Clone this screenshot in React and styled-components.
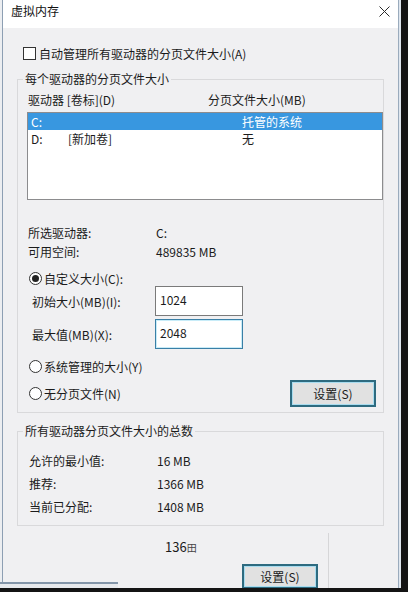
import React from 'react';
import styled, { createGlobalStyle } from 'styled-components';

const drives = [
  { letter: 'C:', label: '', size: '托管的系统', selected: true },
  { letter: 'D:', label: '[新加卷]', size: '无', selected: false },
];

const totals = [
  ['允许的最小值:', '16 MB'],
  ['推荐:', '1366 MB'],
  ['当前已分配:', '1408 MB'],
];

export default function App() {
  return (
    <Screen>
      <GlobalStyle />
      <Window>
        <TitleBar>
          <Title>虚拟内存</Title>
          <Close width="11" height="11" viewBox="0 0 11 11">
            <path d="M0.5 0.5 L10.5 10.5 M10.5 0.5 L0.5 10.5" stroke="#2a2a2a" strokeWidth="1" />
          </Close>
        </TitleBar>

        <Body>
          <CheckRow>
            <CheckBox />
            <span>自动管理所有驱动器的分页文件大小(A)</span>
          </CheckRow>

          <Group $pad="5px 0 5px 9px">
            <Legend $shift={-4}>每个驱动器的分页文件大小</Legend>
            <HeaderRow>
              <span>驱动器 [卷标](D)</span>
              <span>分页文件大小(MB)</span>
            </HeaderRow>
            <List>
              {drives.map((d) => (
                <ListRow key={d.letter} $selected={d.selected}>
                  <span>{d.letter}</span>
                  <span>{d.label}</span>
                  <span>{d.size}</span>
                </ListRow>
              ))}
            </List>

            <InfoRow $top={23}>
              <span>所选驱动器:</span>
              <span>C:</span>
            </InfoRow>
            <InfoRow>
              <span>可用空间:</span>
              <span>489835 MB</span>
            </InfoRow>

            <RadioRow $top={10}>
              <Radio $checked />
              <span>自定义大小(C):</span>
            </RadioRow>
            <FieldRow>
              <FieldLabel>初始大小(MB)(I):</FieldLabel>
              <TextBox>1024</TextBox>
            </FieldRow>
            <FieldRow $top={3}>
              <FieldLabel>最大值(MB)(X):</FieldLabel>
              <TextBox $focused>2048</TextBox>
            </FieldRow>
            <RadioRow $top={10}>
              <Radio />
              <span>系统管理的大小(Y)</span>
            </RadioRow>
            <ActionRow>
              <RadioRow>
                <Radio />
                <span>无分页文件(N)</span>
              </RadioRow>
              <Button $w={86} $h={27}>设置(S)</Button>
            </ActionRow>
          </Group>

          <Group $pad="10px 0 7px 11px">
            <Legend $shift={-6}>所有驱动器分页文件大小的总数</Legend>
            {totals.map(([k, v]) => (
              <TotalRow key={k}>
                <span>{k}</span>
                <span>{v}</span>
              </TotalRow>
            ))}
          </Group>
        </Body>

        <Footer>
          <FooterMain>
            <Counter>
              136<small>田</small>
            </Counter>
            <FooterButton $w={76} $h={25}>设置(S)</FooterButton>
          </FooterMain>
          <FooterSide />
        </Footer>
      </Window>
      <BackCorner />
    </Screen>
  );
}

const GlobalStyle = createGlobalStyle`
  html, body {
    margin: 0;
    padding: 0;
    background: #141414;
  }
  body {
    font-family: "Noto Sans CJK SC", "Microsoft YaHei", sans-serif;
    font-size: 12px;
    color: #1b1b1b;
  }
  * {
    box-sizing: border-box;
  }
`;

const Screen = styled.div`
  position: relative;
  width: 408px;
  height: 592px;
  overflow: hidden;
  background: #141414;
`;

const Window = styled.div`
  display: flex;
  flex-direction: column;
  width: 397px;
  height: 588px;
  margin-left: 2px;
  background: #f0f0f2;
  border-left: 1px solid #8d9fb3;
  border-right: 1px solid #9aabbd;
  box-shadow: 2px 0 0 #dfe6ee, -2px 0 0 #eceef1;
  overflow: hidden;
`;

const TitleBar = styled.div`
  display: flex;
  justify-content: space-between;
  align-items: flex-start;
  height: 28px;
  flex-shrink: 0;
  padding: 3px 0 0 8px;
  background: #ffffff;
`;

const Title = styled.div`
  line-height: 16px;
  color: #111;
`;

const Close = styled.svg`
  margin: 3px 8px 0 0;
`;

const Body = styled.div`
  padding: 17px 14px 0 14px;
`;

const CheckRow = styled.div`
  display: flex;
  align-items: center;
  gap: 3px;
  height: 16px;
  margin-left: 6px;
`;

const CheckBox = styled.span`
  width: 13px;
  height: 13px;
  border: 1px solid #333;
  background: #fff;
`;

const Group = styled.fieldset`
  margin: 10px 0 0;
  min-width: 0;
  padding: ${(p) => p.$pad};
  border: 1px solid #d9d9db;
`;

const Legend = styled.legend`
  padding: 0 2px;
  margin-left: ${(p) => p.$shift}px;
  line-height: 16px;
`;

const HeaderRow = styled.div`
  display: grid;
  grid-template-columns: 180px 1fr;
  height: 16px;
  line-height: 16px;
  padding-left: 1px;
`;

const List = styled.div`
  height: 88px;
  margin-top: 4px;
  background: #fff;
  border: 1px solid #8c8c8e;
`;

const ListRow = styled.div`
  display: grid;
  grid-template-columns: 37px 174px 1fr;
  height: 17px;
  line-height: 17px;
  padding-left: 3px;
  background: ${(p) => (p.$selected ? '#3897e0' : 'transparent')};
  color: ${(p) => (p.$selected ? '#ffffff' : '#1b1b1b')};
`;

const InfoRow = styled.div`
  display: grid;
  grid-template-columns: 128px 1fr;
  height: 19px;
  line-height: 19px;
  margin-top: ${(p) => p.$top || 0}px;
  padding-left: 1px;
`;

const RadioRow = styled.div`
  display: flex;
  align-items: center;
  gap: 2px;
  height: 15px;
  margin-top: ${(p) => p.$top || 0}px;
  padding-left: 2px;
`;

const Radio = styled.span`
  display: inline-flex;
  align-items: center;
  justify-content: center;
  width: 13px;
  height: 13px;
  border-radius: 50%;
  border: 1px solid #333;
  background: #fff;
  &::after {
    content: '';
    width: 7px;
    height: 7px;
    border-radius: 50%;
    background: ${(p) => (p.$checked ? '#222' : 'transparent')};
  }
`;

const FieldRow = styled.div`
  display: grid;
  grid-template-columns: 128px 88px;
  align-items: center;
  height: 30px;
  margin-top: ${(p) => p.$top || 0}px;
`;

const FieldLabel = styled.span`
  padding-left: 5px;
`;

const TextBox = styled.div`
  height: 30px;
  padding: 4px 0 0 4px;
  line-height: 17px;
  background: #fff;
  border: 1px solid ${(p) => (p.$focused ? '#3a7fa6' : '#7a7a7a')};
  box-shadow: ${(p) => (p.$focused ? 'inset 0 0 0 1px #c8ecf8' : 'none')};
`;

const ActionRow = styled.div`
  display: flex;
  justify-content: space-between;
  align-items: center;
  height: 28px;
  margin-top: 5px;
  padding-right: 7px;
`;

const Button = styled.button`
  width: ${(p) => p.$w}px;
  height: ${(p) => p.$h}px;
  padding: 0;
  font: inherit;
  color: #1b1b1b;
  background: #e1e1e1;
  border: 2px solid #2e6b80;
  box-shadow: inset 0 0 0 1px #a8dcef;
`;

const FooterButton = styled(Button)`
  align-self: flex-end;
  margin: 8px 10px 0 0;
`;

const TotalRow = styled.div`
  display: grid;
  grid-template-columns: 128px 1fr;
  height: 23px;
  line-height: 23px;
`;

const Footer = styled.div`
  display: flex;
  flex: 1;
`;

const FooterMain = styled.div`
  display: flex;
  flex-direction: column;
  width: 325px;
`;

const Counter = styled.div`
  margin-top: 12px;
  padding-left: 162px;
  line-height: 17px;
  font-size: 13px;
  small {
    font-size: 10px;
    color: #444;
  }
`;

const FooterSide = styled.div`
  flex: 1;
  margin-top: 7px;
  border-left: 1px solid #d6d6d8;
`;

const BackCorner = styled.div`
  position: absolute;
  left: 0;
  top: 582px;
  width: 118px;
  height: 6px;
  background: #e8eaed;
  border-top: 2px solid #8496a9;
`;
